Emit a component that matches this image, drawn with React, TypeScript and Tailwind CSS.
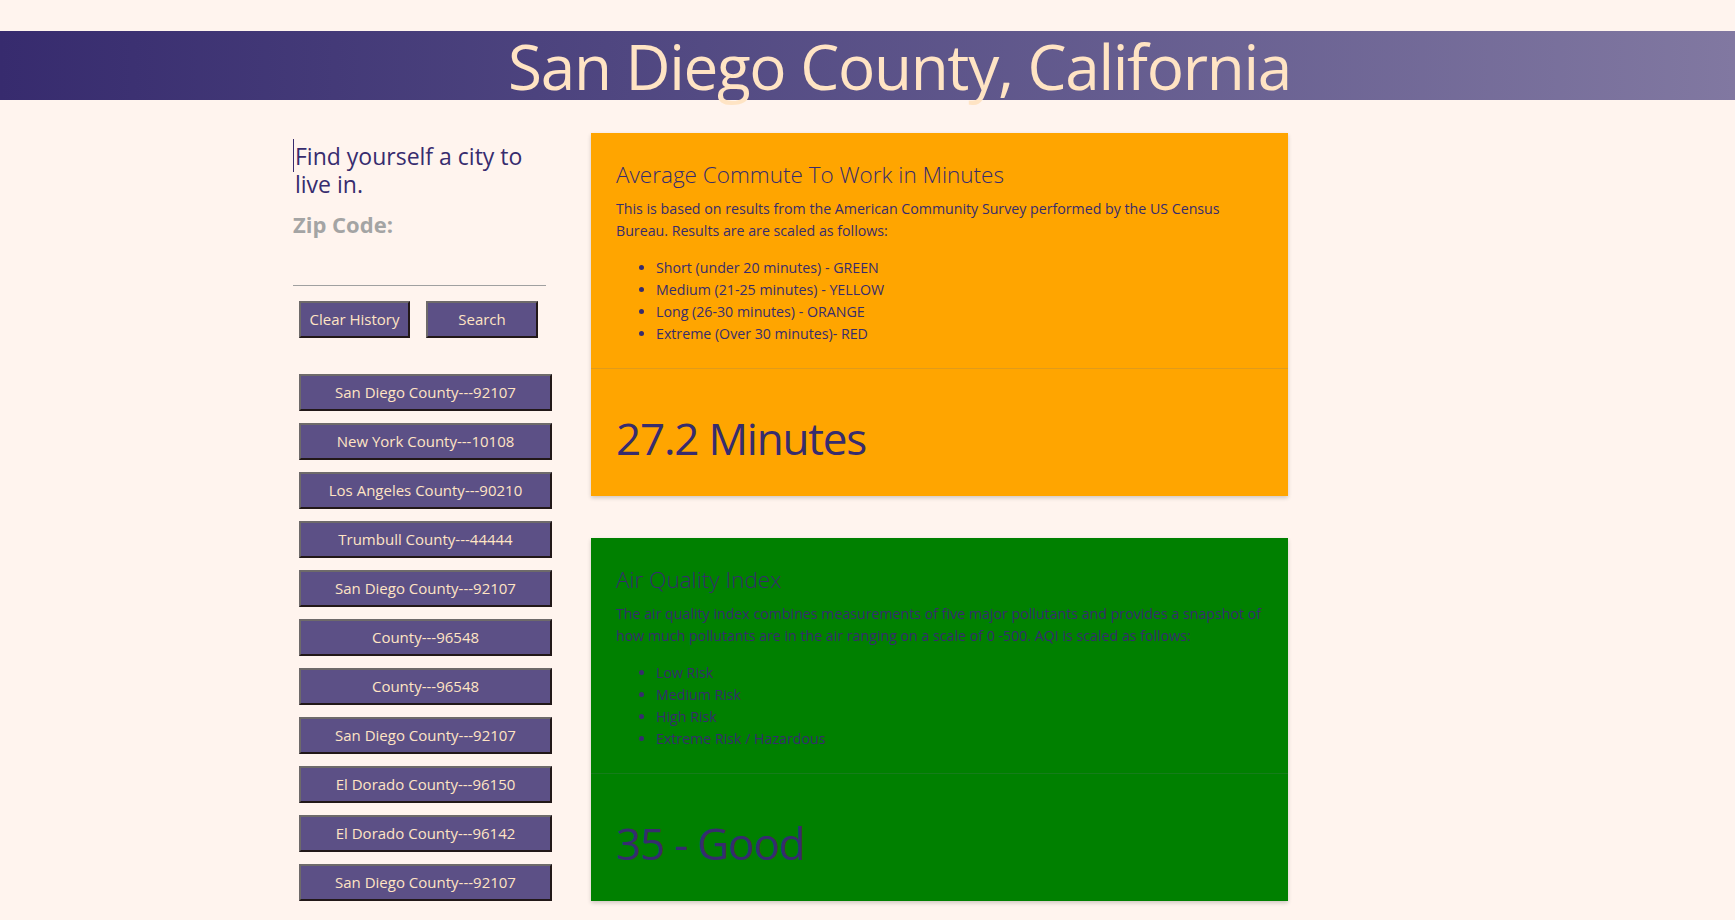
import React from "react";

const history = [
  "San Diego County---92107",
  "New York County---10108",
  "Los Angeles County---90210",
  "Trumbull County---44444",
  "San Diego County---92107",
  "County---96548",
  "County---96548",
  "San Diego County---92107",
  "El Dorado County---96150",
  "El Dorado County---96142",
  "San Diego County---92107",
];

const btn =
  "bg-[#5c5086] text-[#ffe4c4] text-[15px] border-2 border-t-[#6e6a6a] border-l-[#6e6a6a] border-b-[#221818] border-r-[#221818] flex items-center justify-center";

function Card({
  bg,
  title,
  text,
  items,
  value,
}: {
  bg: string;
  title: string;
  text: string;
  items: string[];
  value: string;
}) {
  return (
    <div className={`w-[697px] ${bg} shadow-[0_2px_4px_rgba(0,0,0,0.18)] text-[#372c6e]`}>
      <div className="h-[235px] px-[25px] pt-[28px]">
        <h2 className="text-[22.5px] leading-[28px] font-light">{title}</h2>
        <p className="mt-[9px] text-[14.2px] leading-[22px]">{text}</p>
        <ul className="mt-[15px] list-disc pl-[40px] text-[14.2px] leading-[22px]">
          {items.map((i) => (
            <li key={i}>{i}</li>
          ))}
        </ul>
      </div>
      <div className="h-[128px] border-t border-gray-500/20 px-[25px] pt-[47px]">
        <div className="text-[44px] leading-none tracking-[-1.2px]">{value}</div>
      </div>
    </div>
  );
}

export default function App() {
  return (
    <div
      className="min-h-screen bg-[#fff4ee] pt-[31px]"
      style={{ fontFamily: '"Open Sans", "Noto Sans", sans-serif' }}
    >
      <header className="h-[69px] bg-gradient-to-r from-[#372b6e] to-[#8178a1]">
        <h1 className="pl-[64px] pt-[4px] text-center text-[62px] leading-none tracking-[-1.3px] text-[#ffe4c4]">
          San Diego County, California
        </h1>
      </header>
      <main className="flex items-start gap-[39px] pl-[293px]">
        <div className="mt-[42px] w-[259px]">
          <div className="flex items-start gap-[1px]">
            <span className="mt-[-3px] h-[33px] w-px shrink-0 bg-[#372c6e]" />
            <p className="text-[23px] leading-[28px] text-[#372c6e]">
              Find yourself a city to
              <br />
              live in.
            </p>
          </div>
          <label className="mt-[12px] block text-[22px] font-bold leading-[28px] text-[#a4a4a4]">
            Zip Code:
          </label>
          <input
            className="mt-[18px] block h-[30px] w-[253px] border-b border-[#a0a0a0] bg-transparent outline-none"
            type="text"
          />
          <div className="mt-[15px] flex gap-[16px] pl-[6px]">
            <button className={`${btn} h-[37px] w-[111px]`}>Clear History</button>
            <button className={`${btn} h-[37px] w-[112px]`}>Search</button>
          </div>
          <div className="mt-[36px] flex flex-col gap-[12px] pl-[6px]">
            {history.map((h, i) => (
              <button key={i} className={`${btn} h-[37px] w-[253px]`}>
                {h}
              </button>
            ))}
          </div>
        </div>
        <div className="mt-[33px] flex flex-col gap-[42px]">
          <Card
            bg="bg-[#ffa500]"
            title="Average Commute To Work in Minutes"
            text="This is based on results from the American Community Survey performed by the US Census Bureau. Results are are scaled as follows:"
            items={[
              "Short (under 20 minutes) - GREEN",
              "Medium (21-25 minutes) - YELLOW",
              "Long (26-30 minutes) - ORANGE",
              "Extreme (Over 30 minutes)- RED",
            ]}
            value="27.2 Minutes"
          />
          <Card
            bg="bg-[#008000]"
            title="Air Quality Index"
            text="The air quality index combines measurements of five major pollutants and provides a snapshot of how much pollutants are in the air ranging on a scale of 0 -500. AQI is scaled as follows:"
            items={["Low Risk", "Medium Risk", "High Risk", "Extreme Risk / Hazardous"]}
            value="35 - Good"
          />
        </div>
      </main>
    </div>
  );
}
